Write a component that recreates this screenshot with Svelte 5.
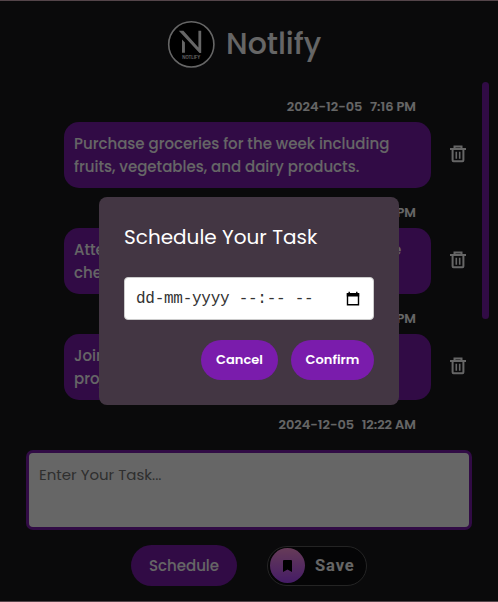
<script>
  const tasks = [
    { date: '2024-12-05', time: '7:16 PM', lines: ['Purchase groceries for the week including', 'fruits, vegetables, and dairy products.'] },
    { date: '2024-12-05', time: '7:15 PM', lines: ['Attend your doctor appointment for routine', 'checkup and reports.'] },
    { date: '2024-12-05', time: '7:14 PM', lines: ['Join the team meeting to discuss', 'project updates.'] },
    { date: '2024-12-05', time: '12:22 AM', lines: [] }
  ];
</script>

<div class="app">
  <header>
    <svg class="logo" width="48" height="48" viewBox="0 0 48 48">
      <circle cx="24.3" cy="24.4" r="22.6" fill="#000" stroke="#fff" stroke-width="1.6" />
      <path d="M11.8 10.8h4.6L31.4 27.6V10.8h2.8V33h-1.7zM15 19.4l2.9 3.2V32.8H15z" fill="#fff" />
      <text x="24.3" y="39" text-anchor="middle" textLength="18">NOTLIFY</text>
    </svg>
    <h1>Notlify</h1>
  </header>

  <div class="scroller">
    <div class="list">
      {#each tasks as task}
        <article>
          <div class="stamp"><span>{task.date}</span><span>{task.time}</span></div>
          {#if task.lines.length}
            <div class="row">
              <div class="bubble">
                {#each task.lines as line}<div>{line}</div>{/each}
              </div>
              <svg class="trash" width="16" height="18" viewBox="0 0 16 18" fill="none" stroke="#fff">
                <path d="M0 4h16" stroke-width="2" />
                <path d="M4.5 3.7V1.4h7v2.3M2.6 4v11.3q0 .9.9.9h9q.9 0 .9-.9V4" stroke-width="2" />
                <path d="M6.3 6.8v7M9.7 6.8v7" stroke-width="1.6" />
              </svg>
            </div>
          {/if}
        </article>
      {/each}
    </div>
    <div class="track"><div class="thumb"></div></div>
  </div>

  <div class="entry">Enter Your Task...</div>

  <div class="actions">
    <button class="schedule">Schedule</button>
    <button class="save">
      <span class="disc">
        <svg width="9" height="12" viewBox="0 0 9 12"><path d="M0 1q0-1 1-1h7q1 0 1 1v11L4.5 9.6 0 12z" fill="#000" /></svg>
      </span>
      <span class="save-label">Save</span>
    </button>
  </div>
</div>

<div class="overlay">
  <div class="modal">
    <h2>Schedule Your Task</h2>
    <div class="field">
      <span>dd-mm-yyyy --:-- --</span>
      <svg width="14" height="16" viewBox="0 0 14 16">
        <path d="M1.5 3h11v10.8h-11z" fill="none" stroke="#000" stroke-width="1.4" />
        <path d="M.8 2h12.4v3.6H.8zM2.5.7h1.4V2H2.5zM10.1.7h1.4V2h-1.4z" fill="#000" />
      </svg>
    </div>
    <div class="buttons">
      <button class="cancel">Cancel</button>
      <button class="confirm">Confirm</button>
    </div>
  </div>
</div>
<div class="edges"></div>

<style>
  :global(body) { margin: 0; background: #19191e; }
  .app, .overlay, h1, h2, button { font-family: Poppins, Inter, sans-serif; }
  .app {
    width: 498px; height: 602px; overflow: hidden; box-sizing: border-box;
    display: flex; flex-direction: column; background: #19191d; color: #fff;
  }
  header { height: 82px; flex: none; display: flex; padding: 20px 0 0 167px; box-sizing: border-box; }
  .logo { flex: none; }
  .logo text { font: 600 4.2px Inter, sans-serif; fill: #fff; }
  h1 { margin: 0 0 0 11px; font-size: 30px; font-weight: 500; line-height: 48px; }

  .scroller { height: 358px; flex: none; display: flex; overflow: hidden; }
  .list { width: 482px; flex: none; }
  article { height: 106px; }
  .stamp {
    height: 40px; box-sizing: border-box; padding: 9px 66px 0 0; display: flex; gap: 7.5px;
    justify-content: flex-end; font-size: 12.95px; font-weight: 600; line-height: 31px; white-space: nowrap;
  }
  .row { display: flex; align-items: center; padding-left: 64px; }
  .bubble {
    width: 367px; height: 66px; box-sizing: border-box; padding: 10px; border-radius: 15px;
    background: #7a1cac; font-size: 15px; font-weight: 500; line-height: 23px; white-space: nowrap;
  }
  .trash { margin: -3px 0 0 19px; }
  .track { width: 7px; }
  .thumb { height: 237px; border-radius: 4px; background: #7a1cac; }

  .entry {
    margin: 10px 26px 0; height: 80px; flex: none; box-sizing: border-box; border: 3px solid #7a1cac;
    border-radius: 7px; background: #fff; padding: 10px; font-size: 15px; line-height: 24px; color: #757575;
  }
  .actions { display: flex; align-items: center; margin: 15px 0 0 131px; gap: 30px; }
  button { border: 0; padding: 0; color: #fff; }
  .schedule { width: 106px; height: 41px; border-radius: 21px; background: #7a1cac; font-size: 15px; font-weight: 500; }
  .save {
    width: 100px; height: 40px; box-sizing: border-box; border: 1px solid #5b5b5b; border-radius: 20px;
    background: #0d0d0f; display: flex; align-items: center; padding-left: 2px; gap: 10px;
  }
  .disc {
    width: 35px; height: 35px; border-radius: 50%; display: flex; align-items: center; justify-content: center;
    background: linear-gradient(#ff94dc, #ac46ff);
  }
  .save-label { font: 700 16.5px Roboto, sans-serif; letter-spacing: .9px; }

  .overlay {
    position: absolute; inset: 0; width: 498px; height: 602px; background: rgba(0, 0, 0, .6);
    display: flex; align-items: center; justify-content: center;
  }
  .modal { width: 300px; height: 208px; box-sizing: border-box; padding: 25px; border-radius: 8px; background: #433643; color: #fff; }
  h2 { margin: 0; font-size: 20px; font-weight: 400; line-height: 30px; white-space: nowrap; }
  .field {
    margin-top: 25px; height: 43px; box-sizing: border-box; border: 1px solid #ccc; border-radius: 4px;
    background: #fff; color: #333; display: flex; align-items: center; justify-content: space-between; padding: 0 13px 0 11px;
    font-family: "Liberation Mono", monospace; font-size: 16px; letter-spacing: -.27px; white-space: pre;
  }
  .buttons { display: flex; justify-content: flex-end; gap: 13px; margin-top: 20px; }
  .buttons button { height: 40px; border-radius: 20px; background: #7a1cac; font-size: 13px; font-weight: 600; }
  .cancel { width: 77px; }
  .confirm { width: 83px; }
  .edges {
    position: absolute; inset: 0; width: 498px; height: 602px; box-sizing: border-box; pointer-events: none;
    border-top: 1px solid #54454a; border-bottom: 1px solid #54454a;
  }
</style>
